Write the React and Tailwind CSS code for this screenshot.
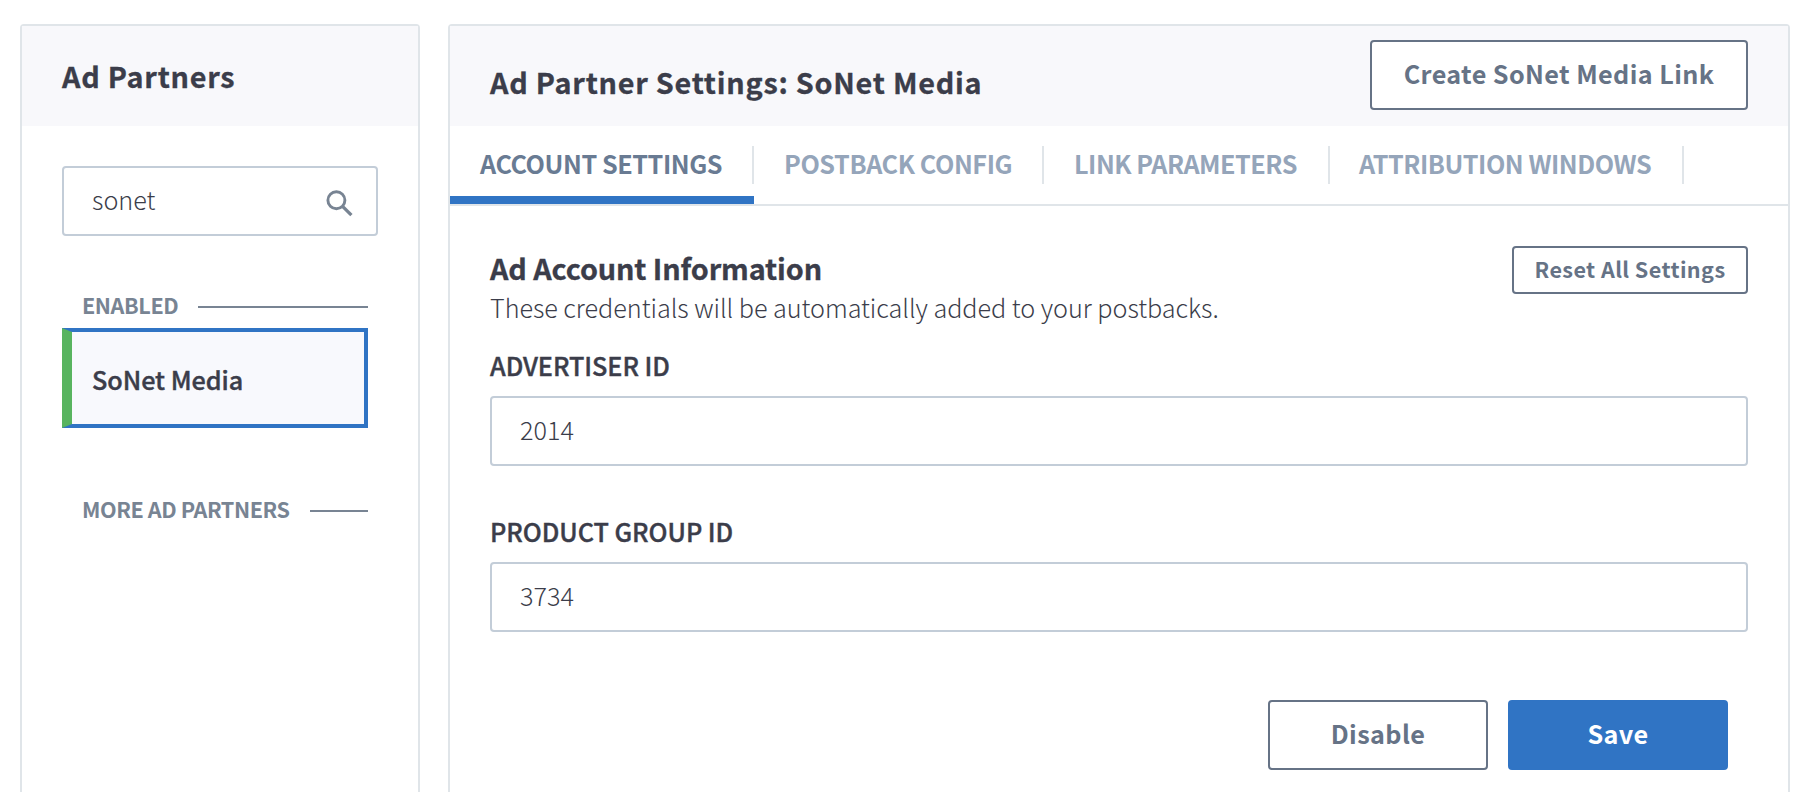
const TABS = [
  { label: "POSTBACK CONFIG", width: "w-[290px] pl-[30px] tracking-[-0.42px]" },
  { label: "LINK PARAMETERS", width: "w-[286px] pl-[30px] tracking-[-0.48px]" },
  { label: "ATTRIBUTION WINDOWS", width: "w-[354px] pl-[29px] tracking-[-0.48px]" },
];

function Button({ className = "", children }) {
  return (
    <button
      className={`flex shrink-0 items-center justify-center rounded-[4px] border-2 font-bold tracking-[0.4px] whitespace-nowrap ${className}`}
    >
      {children}
    </button>
  );
}

function SectionLabel({ className = "", children }) {
  return (
    <div className={`flex h-8 items-center pl-5 text-[21.6px] leading-8 font-bold tracking-[-0.42px] text-[#788493] ${className}`}>
      <span className="-mt-[5px] whitespace-nowrap">{children}</span>
      <span className="ml-5 h-0.5 flex-1 bg-[#788493]" />
    </div>
  );
}

function Field({ label, value, className = "" }) {
  return (
    <label className={`block ${className}`}>
      <span className="block h-[50px] text-[25.2px] leading-[38px] font-medium tracking-[-0.04px] [-webkit-text-stroke:0.4px]">
        {label}
      </span>
      <input
        defaultValue={value}
        className="block h-[70px] w-full rounded-[4px] border-2 border-[#c3cdd8] bg-white pr-7 pb-1 pl-7 text-[25.2px] font-light outline-none"
      />
    </label>
  );
}

export default function App() {
  return (
    <div className="flex h-[792px] w-[1810px] gap-7 overflow-hidden bg-white pt-6 pl-5 font-['Noto_Sans_CJK_SC','Noto_Sans',sans-serif] text-[#3b3d4a]">
      <aside className="flex h-[800px] w-[400px] shrink-0 flex-col rounded-t-[4px] border-2 border-[#e0e5e9]">
        <header className="flex h-[100px] shrink-0 items-center bg-[#f8f8fb] pl-10">
          <h2 className="text-[28.8px] leading-10 font-bold tracking-[0.75px] [-webkit-text-stroke:0.3px]">Ad Partners</h2>
        </header>
        <div className="flex flex-col pt-10 pl-10">
          <div className="flex h-[70px] w-[316px] items-center rounded-[4px] border-2 border-[#c3cdd8] pr-[22px] pl-7">
            <input
              defaultValue="sonet"
              className="min-w-0 flex-1 bg-transparent pb-0.5 text-[25.2px] font-light outline-none"
            />
            <svg viewBox="0 0 28 28" className="mt-1.5 h-7 w-7 shrink-0" fill="none" stroke="#788493">
              <circle cx="10.4" cy="10.3" r="8.5" strokeWidth="2.9" />
              <path d="M16.8 16.6 25.4 25.2" strokeWidth="3.3" />
            </svg>
          </div>
          <SectionLabel className="mt-[55px] w-[306px]">ENABLED</SectionLabel>
          <div className="mt-[5px] flex h-[100px] w-[306px] items-center border-4 border-l-[10px] border-[#3074c4] border-l-[#58b45f] bg-[#f8f9fd] pt-0.5 pl-5 text-[25.2px] leading-10 font-medium tracking-[-0.04px] [-webkit-text-stroke:0.4px]">
            SoNet Media
          </div>
          <SectionLabel className="mt-[67px] w-[306px]">MORE AD PARTNERS</SectionLabel>
        </div>
      </aside>

      <main className="flex h-[800px] w-[1342px] shrink-0 flex-col rounded-t-[4px] border-2 border-[#e0e5e9]">
        <header className="flex h-[100px] shrink-0 items-start justify-between bg-[#f8f8fb] pr-10 pl-10">
          <h1 className="mt-9 text-[28.8px] leading-10 font-bold tracking-[0.75px] [-webkit-text-stroke:0.3px]">
            Ad Partner Settings: SoNet Media
          </h1>
          <Button className="mt-3.5 h-[70px] w-[378px] border-[#667386] bg-white pb-0.5 text-[25.2px] text-[#667386]">
            Create SoNet Media Link
          </Button>
        </header>

        <nav className="flex h-20 shrink-0 border-b-2 border-[#e0e5e9] text-[25.2px] leading-[38px] font-bold">
          <div className="flex w-[304px] flex-col justify-between pt-5 text-[#697b93]">
            <div className="h-[38px] border-r-2 border-[#e0e5e9] pl-[30px] tracking-[-0.44px]">
              <span className="-mt-0.5 block whitespace-nowrap">ACCOUNT SETTINGS</span>
            </div>
            <div className="h-2 bg-[#3074c4]" />
          </div>
          {TABS.map((tab) => (
            <div key={tab.label} className={`mt-5 h-[38px] border-r-2 border-[#e0e5e9] text-[#95a5ba] ${tab.width}`}>
              <span className="-mt-0.5 block whitespace-nowrap">{tab.label}</span>
            </div>
          ))}
        </nav>

        <section className="flex flex-col px-10 pt-10">
          <div className="flex h-[100px] items-start justify-between">
            <div>
              <h3 className="text-[28.8px] leading-[43px] font-bold tracking-[-0.12px] [-webkit-text-stroke:0.3px]">
                Ad Account Information
              </h3>
              <p className="-mt-px text-[25.2px] leading-[38px] font-light tracking-[-0.04px]">
                These credentials will be automatically added to your postbacks.
              </p>
            </div>
            <Button className="h-12 w-[236px] border-[#667386] bg-white pb-0.5 text-[21.6px] text-[#667386]">
              Reset All Settings
            </Button>
          </div>
          <Field label="ADVERTISER ID" value="2014" />
          <Field className="mt-[46px]" label="PRODUCT GROUP ID" value="3734" />
          <div className="mt-[68px] flex justify-end gap-5 pr-5 text-[25.2px]">
            <Button className="h-[70px] w-[220px] border-[#667386] bg-white pb-0.5 text-[#667386]">Disable</Button>
            <Button className="h-[70px] w-[220px] border-[#3074c4] bg-[#3074c4] pb-0.5 text-white">Save</Button>
          </div>
        </section>
      </main>
    </div>
  );
}
